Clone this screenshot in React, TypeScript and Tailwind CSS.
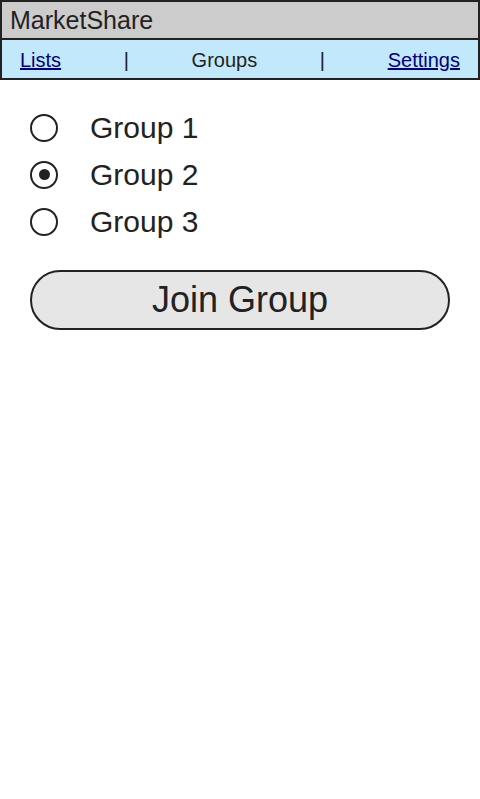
import { useState } from 'react';

const groups = ['Group 1', 'Group 2', 'Group 3'];

const App = () => {
  const [selected, setSelected] = useState('Group 2');

  return (
    <div className="min-h-screen bg-white text-[#222] font-['Liberation_Sans',Arial,sans-serif]">
      <header className="h-[40px] border-2 border-[#222] bg-[#cccccc] flex items-center px-[8px]">
        <span className="text-[25px] leading-none">MarketShare</span>
      </header>
      <nav className="h-[40px] border-x-2 border-b-2 border-[#222] bg-[#c2e8fc] flex items-center justify-between px-[18px] pt-[2px] text-[20px]">
        <a href="#" className="text-[#000080] underline">Lists</a>
        <span>|</span>
        <span>Groups</span>
        <span>|</span>
        <a href="#" className="text-[#000080] underline">Settings</a>
      </nav>

      <main className="px-[30px] pt-[24px]">
        <div className="flex flex-col">
          {groups.map((g) => (
            <label key={g} className="h-[47px] flex items-center gap-[32px] cursor-pointer" onClick={() => setSelected(g)}>
              <span className="w-[28px] h-[28px] rounded-full border-[2.5px] border-[#222] flex items-center justify-center">
                {selected === g && <span className="w-[11px] h-[11px] rounded-full bg-[#222]" />}
              </span>
              <span className="text-[30px] leading-none">{g}</span>
            </label>
          ))}
        </div>
        <button className="mt-[25px] w-[420px] h-[60px] rounded-[30px] border-2 border-[#222] bg-[#e6e6e6] text-[36px] leading-none">
          Join Group
        </button>
      </main>
    </div>
  );
};

export default App;
